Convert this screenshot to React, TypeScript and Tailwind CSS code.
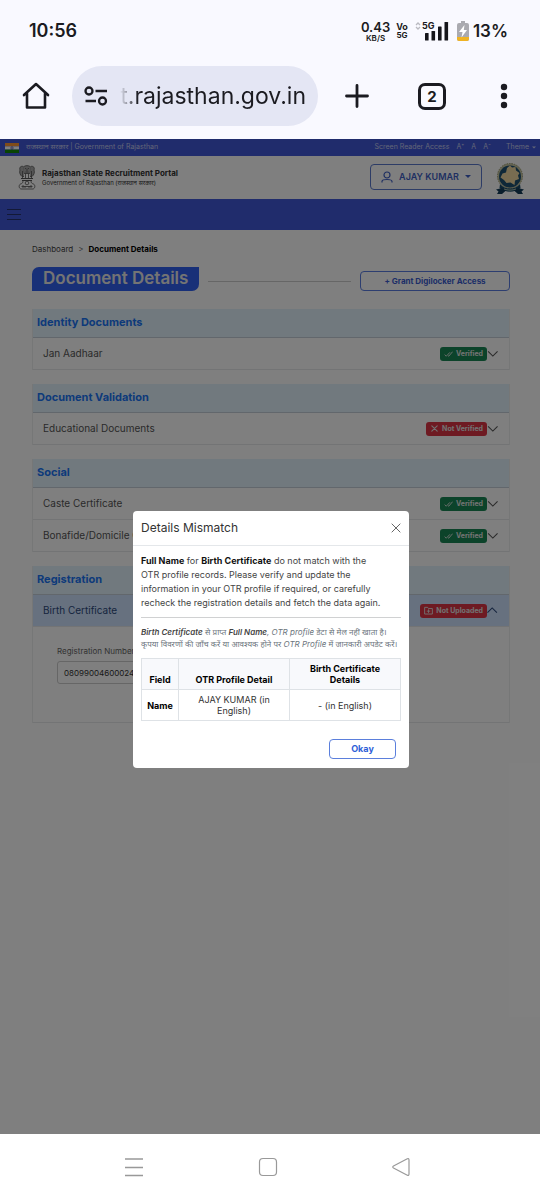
import { useState } from 'react';
import type { ReactNode } from 'react';
import clsx from 'clsx';

type Status = 'verified' | 'notVerified' | 'notUploaded';

interface DocumentRow {
  label: string;
  status: Status;
}

interface DocumentSection {
  title: string;
  rows: DocumentRow[];
}

const SECTIONS: DocumentSection[] = [
  { title: 'Identity Documents', rows: [{ label: 'Jan Aadhaar', status: 'verified' }] },
  { title: 'Document Validation', rows: [{ label: 'Educational Documents', status: 'notVerified' }] },
  {
    title: 'Social',
    rows: [
      { label: 'Caste Certificate', status: 'verified' },
      { label: 'Bonafide/Domicile Certificate', status: 'verified' },
    ],
  },
  { title: 'Registration', rows: [{ label: 'Birth Certificate', status: 'notUploaded' }] },
];

const STATUS_LABEL: Record<Status, string> = {
  verified: 'Verified',
  notVerified: 'Not Verified',
  notUploaded: 'Not Uploaded',
};

function StatusBar() {
  return (
    <div className="flex h-[62px] items-center justify-between pr-8 pl-[29px]">
      <span className="text-[18px] leading-6 font-semibold">10:56</span>
      <div className="flex items-center">
        <div className="flex flex-col items-center font-semibold">
          <span className="text-[13px] leading-[13px]">0.43</span>
          <span className="text-[8px] leading-[8px]">KB/S</span>
        </div>
        <div className="ml-[6px] flex flex-col items-center text-[9px] leading-[9px] font-bold">
          <span>Vo</span>
          <span className="text-[8px]">5G</span>
        </div>
        <div className="ml-[7px] flex h-[20px] items-start">
          <svg viewBox="0 0 6 10" className="h-[10px] w-[6px]" fill="none" stroke="#b9b9c0" strokeWidth="1.3">
            <path d="M1 4L3 2L5 4M1 6L3 8L5 6" />
          </svg>
          <div className="relative h-[20px] w-[28px]">
            <svg viewBox="0 0 28 20" className="h-[20px] w-[28px]" fill="#15151a">
              <rect x="4" y="12" width="3.6" height="7.5" rx="0.6" />
              <rect x="10.500" y="10" width="3.6" height="9.5" rx="0.6" />
              <rect x="17" y="5.500" width="3.6" height="14" rx="0.6" />
              <rect x="23.500" y="1" width="3.6" height="18.500" rx="0.6" />
            </svg>
            <span className="absolute top-0 left-[1px] text-[9px] leading-[9px] font-bold">5G</span>
          </div>
        </div>
        <svg viewBox="0 0 12 20" className="ml-2 h-[20px] w-[12px]">
          <path d="M4 0h4v2h2a2 2 0 0 1 2 2v14a2 2 0 0 1-2 2H2a2 2 0 0 1-2-2V4a2 2 0 0 1 2-2h2z" fill="#aaaab0" />
          <path d="M0 16h12v2a2 2 0 0 1-2 2H2a2 2 0 0 1-2-2z" fill="#f0b323" />
          <path d="M7.500 4L2 11h3.500L4.500 16.500L10 9H6.800z" fill="#fff" />
        </svg>
        <span className="ml-[4px] text-[17px] leading-6 font-semibold">13%</span>
      </div>
    </div>
  );
}

function BrowserBar() {
  return (
    <div className="flex h-[77px] items-start pt-1 pr-7 pl-[22px]">
      <button type="button" aria-label="Home" className="mt-[15px] shrink-0">
        <svg viewBox="0 0 28 30" className="h-[30px] w-[28px]" fill="none" stroke="#1b1b21" strokeWidth="2.6" strokeLinejoin="round" strokeLinecap="round">
          <path d="M2 14L14 3L26 14M5 12.500V26.500H23V12.500" />
        </svg>
      </button>
      <div className="ml-[22px] flex h-[60px] min-w-0 flex-1 items-center rounded-full bg-[#e4e6f4] pr-3 pl-3">
        <svg viewBox="0 0 24 20" className="h-[20px] w-[24px] shrink-0" fill="none" stroke="#1b1b21" strokeWidth="2.300">
          <circle cx="5" cy="5" r="3.500" />
          <path d="M11.500 5H23M1.500 15H12" />
          <circle cx="18.500" cy="15" r="3.500" />
        </svg>
        <input
          type="text"
          dir="rtl"
          aria-label="Address"
          defaultValue="nt.rajasthan.gov.in"
          className="ml-3 h-9 w-full min-w-0 flex-1 bg-transparent text-[23px] text-[#1b1b21] outline-none [mask-image:linear-gradient(to_right,transparent,black_18px)]"
        />
      </div>
      <button type="button" aria-label="New tab" className="mt-[18px] ml-[27px] shrink-0">
        <svg viewBox="0 0 24 24" className="size-6" fill="none" stroke="#1b1b21" strokeWidth="2.800" strokeLinecap="round">
          <path d="M12 1.500V22.500M1.500 12H22.500" />
        </svg>
      </button>
      <button
        type="button"
        aria-label="Open tabs"
        className="mt-[17px] ml-[49px] flex h-[27px] w-[28px] shrink-0 items-center justify-center rounded-[7px] border-[3px] border-[#1b1b21] text-[15px] leading-4 font-bold"
      >
        2
      </button>
      <button type="button" aria-label="More" className="mt-[17px] ml-[50px] shrink-0">
        <svg viewBox="0 0 16 26" className="h-[26px] w-4" fill="#1b1b21">
          <circle cx="8" cy="4" r="3.200" />
          <circle cx="8" cy="13" r="3.200" />
          <circle cx="8" cy="22" r="3.200" />
        </svg>
      </button>
    </div>
  );
}

function FlagIcon() {
  return (
    <svg viewBox="0 0 14 10" className="h-[10px] w-[14px]">
      <rect width="14" height="3.400" fill="#ff9933" />
      <rect y="3.400" width="14" height="3.200" fill="#fff" />
      <rect y="6.600" width="14" height="3.400" fill="#138808" />
      <circle cx="7" cy="5" r="1.200" fill="none" stroke="#000080" strokeWidth="0.500" />
    </svg>
  );
}

function EmblemIcon() {
  return (
    <svg viewBox="0 0 18 26" className="mb-[2px] h-[26px] w-[18px]" fill="none" stroke="#555" strokeWidth="0.800">
      <path d="M5.500 3.500C6 1 12 1 12.500 3.500C13.500 5 12.800 8 11.800 9.500H6.200C5.200 8 4.500 5 5.500 3.500Z" fill="#aaa" />
      <path d="M5.500 2.500C2.500 1.500 1 4 2 6C1 8 2 11 4 12.500H6M12.500 2.500C15.500 1.500 17 4 16 6C17 8 16 11 14 12.500H12" fill="#aaa" />
      <path d="M7 4.500h1.200M9.800 4.500H11M9 5v2M7.500 8h3M7.500 9.500V14M10.500 9.500V14M4.500 7V14M13.500 7V14" />
      <path d="M3 14.500h12M4 16.500h10" strokeWidth="1.200" />
      <path d="M5 17C5 19 4 19.500 2.500 20C.5 21 .8 24.500 3 25H15C17.200 24.500 17.500 21 15.500 20C14 19.500 13 19 13 17" />
      <circle cx="9" cy="19" r="1.800" />
      <path d="M3.500 22.500h11M5 24v-3M13 24v-3M7 24v-2M11 24v-2" />
    </svg>
  );
}

function BoardLogo() {
  return (
    <svg viewBox="0 0 28 32" className="h-[32px] w-[28px]">
      <circle cx="14" cy="14" r="12.500" fill="#c9c8a4" stroke="#9a9a70" strokeWidth="1" strokeDasharray="1.500 1" />
      <circle cx="14" cy="14.500" r="11" fill="#1e5070" />
      <path d="M14 3.500L16 5.500L19.500 5L20 8.500L23.500 11L22 13.500L23 17L19 18.500L18.500 23L14.500 20.500L10.500 21L8 18L4.500 15.500L6.500 11.500L10 10.500L11 6Z" fill="#f1d9a3" />
      <path d="M4 22C9 28 19 28 24 22L24.500 26C18 31 10 31 3.500 26Z" fill="#1a4a68" />
      <path d="M0 27.500L6 26L10 28.500L6 32H1L2.500 29.500ZM28 27.500L22 26L18 28.500L22 32H27L25.500 29.500Z" fill="#143c58" />
      <path d="M8 27C12 28.500 16 28.500 20 27" stroke="#b7c9b2" strokeWidth="0.900" fill="none" />
    </svg>
  );
}

function Caret({ className }: { className?: string }) {
  return (
    <svg viewBox="0 0 6 3" className={clsx('h-[3px]', className)} fill="currentColor">
      <path d="M0 0H6L3 3Z" />
    </svg>
  );
}

function StatusIcon({ status }: { status: Status }) {
  return (
    <svg viewBox="0 0 10 10" className="size-[9px]" fill="none" stroke="currentColor" strokeWidth="1" strokeLinecap="round" strokeLinejoin="round">
      {status === 'verified' && <path d="M1 6.500L2.500 8L6.300 4M4.800 7.600L5.300 8L9.300 3.300" />}
      {status === 'notVerified' && <path d="M2 2L8 8M8 2L2 8" strokeWidth="1.200" />}
      {status === 'notUploaded' && (
        <>
          <path d="M.7 8.500V1.500H4L5 2.800H9.300V8.500Z" />
          <path d="M5 4.200V7.200M3.500 5.700H6.500" />
        </>
      )}
    </svg>
  );
}

function StatusBadge({ status }: { status: Status }) {
  return (
    <span
      className={clsx(
        'flex h-[14px] items-center gap-[3px] rounded-[3px] px-[4px] text-[7px] leading-[14px] font-bold text-[#e4e4e4]',
        status === 'verified' ? 'bg-[#198754]' : 'bg-[#dc3545]'
      )}
    >
      <StatusIcon status={status} />
      {STATUS_LABEL[status]}
    </span>
  );
}

function SectionCard({ section, children }: { section: DocumentSection; children?: ReactNode }) {
  return (
    <section className="border-x border-[#eceeef]">
      <h2 className="flex h-[29px] items-center border-b border-[#c4ced8] bg-[#e3f2fd] px-[4px] pb-[2px] text-[11px] font-bold text-[#1a75f5]">
        {section.title}
      </h2>
      {section.rows.map((row) => {
        const open = row.status === 'notUploaded';
        return (
          <button
            key={row.label}
            type="button"
            aria-expanded={open}
            className={clsx(
              'flex h-8 w-full items-center justify-between border-b border-[#e6e8ea] pr-[11px] pl-[10px] text-[10px]',
              open ? 'bg-[#cfe2ff] text-[#2c4a7c]' : 'text-[#555]'
            )}
          >
            {row.label}
            <span className="flex items-center">
              <StatusBadge status={row.status} />
              <svg viewBox="0 0 10 10" className={clsx('size-[11px]', open && 'rotate-180')} fill="none" stroke="currentColor" strokeWidth="1">
                <path d="M1 3L5.300 7.300L9.600 3" />
              </svg>
            </span>
          </button>
        );
      })}
      {children}
    </section>
  );
}

function MismatchDialog({ onClose }: { onClose: () => void }) {
  return (
    <div className="absolute inset-0 z-20 flex items-center justify-center bg-black/50 pt-[6px] pl-[2px]">
      <div role="dialog" aria-modal="true" aria-labelledby="mismatch-title" className="w-[276px] rounded-[4px] bg-white text-[#333]">
        <div className="flex h-[35px] items-center justify-between border-b border-[#e4e7ea] px-2">
          <h2 id="mismatch-title" className="text-[12px] leading-4">
            Details Mismatch
          </h2>
          <button type="button" aria-label="Close" onClick={onClose}>
            <svg viewBox="0 0 10 10" className="size-[10px]" fill="none" stroke="#666" strokeWidth="1">
              <path d="M.7 .7L9.300 9.300M9.300 .7L.7 9.300" />
            </svg>
          </button>
        </div>
        <div className="px-2 pt-[8px]">
          <p className="text-[9px] leading-[14px] whitespace-nowrap text-[#444]">
            <strong className="font-bold text-[#111]">Full Name</strong> for{' '}
            <strong className="font-bold text-[#111]">Birth Certificate</strong> do not match with the
            <br />
            OTR profile records. Please verify and update the
            <br />
            information in your OTR profile if required, or carefully
            <br />
            recheck the registration details and fetch the data again.
          </p>
          <hr className="mt-[7px] border-[#d0d1d2]" />
          <p className="mt-2 text-[8px] leading-[12px] whitespace-nowrap text-[#6c757d] italic">
            <strong className="font-semibold text-[#444]">Birth Certificate</strong> से प्राप्त{' '}
            <strong className="font-semibold text-[#444]">Full Name</strong>, OTR profile डेटा से मेल नहीं खाता है।
            <br />
            कृपया विवरणों की जाँच करें या आवश्यक होने पर OTR Profile में जानकारी अपडेट करें।
          </p>
          <table className="mt-2 w-full table-fixed border-collapse text-center text-[9px] leading-[11px]">
            <thead className="bg-[#f8f9fc]">
              <tr className="h-[31px] align-bottom">
                <th className="w-[37px] border border-[#dee2e6] pb-1 font-bold text-black">Field</th>
                <th className="border border-[#dee2e6] pb-1 font-bold text-black">OTR Profile Detail</th>
                <th className="border border-[#dee2e6] pb-1 font-bold text-black">
                  Birth Certificate
                  <br />
                  Details
                </th>
              </tr>
            </thead>
            <tbody>
              <tr className="h-[31px]">
                <th className="border border-[#dee2e6] font-bold text-black">Name</th>
                <td className="border border-[#dee2e6]">
                  AJAY KUMAR (in
                  <br />
                  English)
                </td>
                <td className="border border-[#dee2e6]">- (in English)</td>
              </tr>
            </tbody>
          </table>
        </div>
        <div className="flex justify-end px-[13px] pt-[18px] pb-[9px]">
          <button
            type="button"
            onClick={onClose}
            className="h-5 w-[67px] rounded-[4px] border border-[#5b7fdc] text-[9px] font-bold text-[#2f5fd8]"
          >
            Okay
          </button>
        </div>
      </div>
    </div>
  );
}

function PortalHeader() {
  return (
    <header>
      <div className="flex h-[17px] items-center justify-between bg-[#4058d8] pr-1 pl-[5px] text-[7px] text-[#c4cbf0]">
        <div className="flex items-center gap-[7px]">
          <FlagIcon />
          <span>राजस्थान सरकार | Government of Rajasthan</span>
        </div>
        <div className="flex items-center gap-[7px]">
          <a href="#reader">Screen Reader Access</a>
          <button type="button">A⁺</button>
          <button type="button">A</button>
          <button type="button">A⁻</button>
          <button type="button" className="ml-2 flex items-center gap-[3px]">
            Theme
            <Caret className="w-[4px]" />
          </button>
        </div>
      </div>
      <div className="flex h-[43px] items-center justify-between pr-4 pl-[18px]">
        <div className="flex items-center gap-[6px]">
          <EmblemIcon />
          <div className="flex flex-col text-[#333]">
            <span className="text-[8px] leading-[11px] font-bold">Rajasthan State Recruitment Portal</span>
            <span className="text-[6px] leading-[8px]">Government of Rajasthan (राजस्थान सरकार)</span>
          </div>
        </div>
        <div className="flex items-center gap-[14px]">
          <button
            type="button"
            className="mb-[2px] flex h-[26px] w-[112px] items-center justify-center gap-[6px] rounded-[4px] border border-[#5a78cc] text-[9px] font-semibold text-[#3f5fc4]"
          >
            <svg viewBox="0 0 12 12" className="size-3" fill="none" stroke="currentColor" strokeWidth="1.200">
              <circle cx="6" cy="4" r="3" />
              <path d="M1 11.500V10.500C1 9 2.500 8.500 6 8.500S11 9 11 10.500V11.500" />
            </svg>
            AJAY KUMAR
            <Caret className="w-[6px]" />
          </button>
          <BoardLogo />
        </div>
      </div>
      <nav className="flex h-[31px] items-center bg-[#4058d8] pb-[2px] pl-[7px]">
        <button type="button" aria-label="Menu">
          <svg viewBox="0 0 14 12" className="h-3 w-[14px]" stroke="#26326c" strokeWidth="1">
            <path d="M0 1.500H14M0 6.500H14M0 11.500H14" />
          </svg>
        </button>
      </nav>
    </header>
  );
}

function AndroidNav() {
  return (
    <nav className="flex h-[66px] items-center justify-between bg-white pr-[129px] pl-[124px]">
      <button type="button" aria-label="Recent apps">
        <svg viewBox="0 0 20 20" className="size-5" stroke="#999" strokeWidth="1.400">
          <path d="M1 2H19M1 10.500H19M1 18.500H19" />
        </svg>
      </button>
      <button type="button" aria-label="Home screen">
        <svg viewBox="0 0 20 20" className="size-5" fill="none" stroke="#999" strokeWidth="1.200">
          <rect x="1.500" y="1.500" width="17" height="17" rx="3.500" />
        </svg>
      </button>
      <button type="button" aria-label="Back">
        <svg viewBox="0 0 20 20" className="size-5" fill="none" stroke="#999" strokeWidth="1.200" strokeLinejoin="round">
          <path d="M18 3V17Q18 19 16.300 18.200L2.500 11Q1 10 2.500 9L16.300 1.800Q18 1 18 3Z" />
        </svg>
      </button>
    </nav>
  );
}

export default function App() {
  const [dialogOpen, setDialogOpen] = useState(true);

  return (
    <div className="flex min-h-screen flex-col bg-white font-[Inter,'Noto_Sans',sans-serif] text-[#1b1b21]">
      <div className="bg-[#f9f9ff]">
        <StatusBar />
        <BrowserBar />
      </div>

      <div className="relative flex-1 bg-white">
        <PortalHeader />

        <main className="pt-[13px] pr-[30px] pl-8">
          <div className="flex items-center gap-[5px] text-[8px] leading-3">
            <a href="#dashboard" className="text-[#444]">
              Dashboard
            </a>
            <span className="text-[#666]">&gt;</span>
            <span className="font-bold text-black">Document Details</span>
          </div>

          <div className="mt-3 flex items-end">
            <h1 className="flex h-6 items-center rounded-tl-[7px] rounded-br-[7px] bg-[#3060f0] px-[11px] text-[17px] font-semibold text-[#e8e8e8]">
              Document Details
            </h1>
            <hr className="mx-[9px] mb-[9px] flex-1 border-[#ccc]" />
            <button
              type="button"
              className="h-5 w-[150px] rounded-[4px] border border-[#5a7ce0] text-[8px] font-bold text-[#3a5cd0]"
            >
              + Grant Digilocker Access
            </button>
          </div>

          <div className="mt-[18px] flex flex-col gap-[14px]">
            {SECTIONS.map((section) => (
              <SectionCard key={section.title} section={section}>
                {section.title === 'Registration' && (
                  <div className="h-24 border-b border-[#e6e8ea] px-[24px] pt-[18px]">
                    <label htmlFor="registration-number" className="block text-[8px] leading-3 text-[#666]">
                      Registration Number
                    </label>
                    <input
                      id="registration-number"
                      type="text"
                      defaultValue="08099004600024"
                      className="mt-1 h-[23px] w-[140px] rounded-[3px] border border-[#ccc] px-[6px] text-[8px] text-[#333]"
                    />
                  </div>
                )}
              </SectionCard>
            ))}
          </div>
        </main>

        {dialogOpen && <MismatchDialog onClose={() => setDialogOpen(false)} />}
      </div>

      <AndroidNav />
    </div>
  );
}
